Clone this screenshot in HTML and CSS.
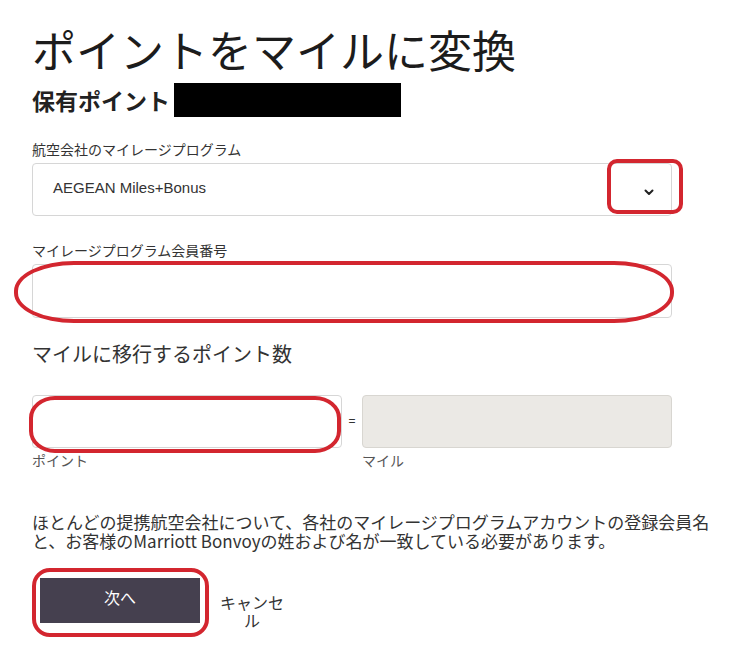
FILE: index.html
```html
<!DOCTYPE html>
<html lang="ja">
<head>
<meta charset="utf-8">
<title>ポイントをマイルに変換</title>
<link rel="stylesheet" href="styles.css">
</head>
<body>
<main class="page">
  <h1 class="title">ポイントをマイルに変換</h1>
  <div class="balance"><span class="balance-label">保有ポイント</span><span class="redact"></span></div>

  <div class="field field-airline">
    <div class="label">航空会社のマイレージプログラム</div>
    <div class="select">
      <span class="select-value">AEGEAN Miles+Bonus</span>
      <svg class="chevron" width="10" height="7" viewBox="0 0 10 7"><path d="M1.5 1.5 L5 5 L8.5 1.5" fill="none" stroke="#222" stroke-width="2" stroke-linecap="round" stroke-linejoin="round"/></svg>
    </div>
  </div>

  <div class="field field-member">
    <div class="label">マイレージプログラム会員番号</div>
    <div class="input"></div>
  </div>

  <h2 class="subtitle">マイルに移行するポイント数</h2>

  <div class="convert">
    <div class="convert-col">
      <div class="input"></div>
      <div class="sublabel">ポイント</div>
    </div>
    <div class="equals">=</div>
    <div class="convert-col">
      <div class="input input-disabled"></div>
      <div class="sublabel">マイル</div>
    </div>
  </div>

  <p class="notice">ほとんどの提携航空会社について、各社のマイレージプログラムアカウントの登録会員名と、お客様のMarriott Bonvoyの姓および名が一致している必要があります。</p>

  <div class="actions">
    <button class="btn-next">次へ</button>
    <span class="cancel">キャンセル</span>
  </div>

  <div class="mark mark-chevron"></div>
  <div class="mark mark-member"></div>
  <div class="mark mark-points"></div>
  <div class="mark mark-button"></div>
</main>
</body>
</html>
```

FILE: styles.css
```css
html, body {
  margin: 0;
  padding: 0;
  background: #fff;
}

body {
  font-family: "Noto Sans CJK JP", "Noto Sans", sans-serif;
  color: #222;
}

.page {
  position: relative;
  width: 640px;
  min-height: 644px;
  padding: 22px 0 0 32px;
}

.title {
  margin: 0;
  font-size: 44px;
  font-weight: 400;
  line-height: 54px;
  color: #1c1c1c;
}

.balance {
  display: flex;
  align-items: center;
  height: 36px;
  margin-top: 6px;
}

.balance-label {
  font-size: 23px;
  font-weight: 700;
  color: #222;
}

.redact {
  display: inline-block;
  width: 227px;
  height: 34px;
  background: #000;
  margin-left: 4px;
}

.field-airline {
  margin-top: 21px;
}

.field-member {
  margin-top: 24px;
}

.label {
  font-size: 14px;
  line-height: 20px;
  color: #333;
  margin-bottom: 4px;
}

.select {
  box-sizing: border-box;
  height: 53px;
  border: 1px solid #d6d6d6;
  border-radius: 4px;
  display: flex;
  align-items: center;
  justify-content: space-between;
  padding: 0 17px 0 20px;
}

.select-value {
  font-family: "Liberation Sans", "Noto Sans", sans-serif;
  font-size: 15px;
  color: #333;
  margin-top: -4px;
}

.chevron {
  display: block;
  margin-top: 6px;
}

.input {
  box-sizing: border-box;
  height: 54px;
  border: 1px solid #d6d6d6;
  border-radius: 4px;
  background: #fff;
}

.input-disabled {
  background: #ebe9e5;
  border-color: #d8d6d1;
}

.subtitle {
  margin: 22px 0 0;
  font-size: 20px;
  font-weight: 400;
  line-height: 28px;
  color: #333;
}

.convert {
  display: flex;
  align-items: flex-start;
  margin-top: 27px;
}

.convert-col {
  width: 310px;
}

.convert-col .input {
  height: 53px;
}

.equals {
  width: 20px;
  text-align: center;
  font-family: "Liberation Sans", sans-serif;
  font-size: 12px;
  line-height: 53px;
  color: #333;
}

.sublabel {
  font-size: 14px;
  line-height: 24px;
  color: #555;
}

.notice {
  width: 684px;
  margin: 40px 0 0;
  font-size: 17px;
  line-height: 19px;
  color: #333;
}

.actions {
  display: flex;
  align-items: center;
  margin-top: 21px;
  padding-left: 8px;
}

.btn-next {
  width: 160px;
  height: 45px;
  border: none;
  border-radius: 0;
  background: #45404f;
  color: #fff;
  font-family: "Noto Sans CJK JP", sans-serif;
  font-size: 16px;
  margin: 0;
  padding: 0 0 6px;
}

.cancel {
  width: 66px;
  margin-left: 19px;
  margin-top: 22px;
  text-align: center;
  font-size: 16px;
  line-height: 18px;
  color: #333;
}

/* red annotation marks drawn over the form */
.mark {
  position: absolute;
  border: 4px solid #d3262f;
  box-sizing: border-box;
}

.mark-chevron {
  left: 607px;
  top: 159px;
  width: 76px;
  height: 55px;
  border-radius: 10px;
}

.mark-member {
  left: 14px;
  top: 261px;
  width: 660px;
  height: 62px;
  border-radius: 60px / 30px;
}

.mark-points {
  left: 29px;
  top: 396px;
  width: 312px;
  height: 57px;
  border-radius: 26px / 22px;
}

.mark-button {
  left: 32px;
  top: 568px;
  width: 177px;
  height: 69px;
  border-radius: 18px;
}
```
